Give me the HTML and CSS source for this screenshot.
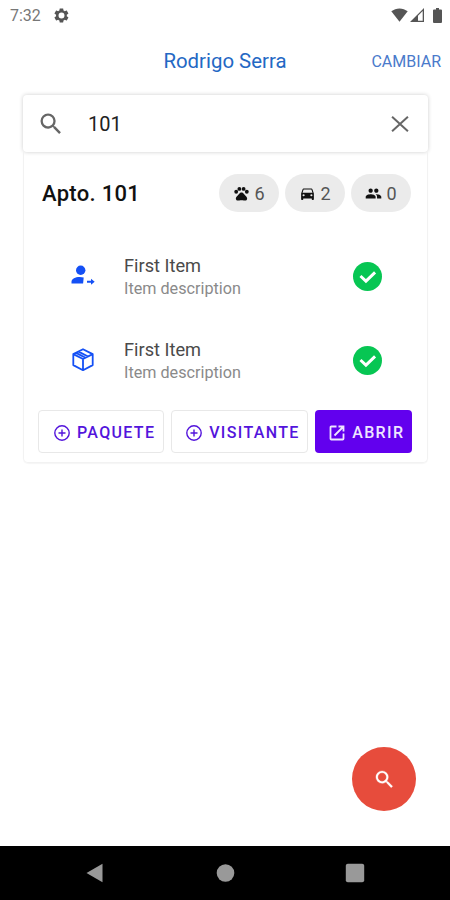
FILE: index.html
```
<!DOCTYPE html>
<html lang="es">
<head>
    <meta charset="UTF-8">
    <meta name="viewport" content="width=device-width, initial-scale=1.0">
    <title>Rodrigo Serra</title>
    <link rel="stylesheet" href="styles.css">
</head>
<body>
    <div class="status-bar">
        <span class="clock">7:32</span>
        <svg class="gear" viewBox="0 0 24 24"><path fill-rule="evenodd" d="M19.4 13c0-.3.1-.6.1-1s0-.7-.1-1l2.1-1.600c.2-.1.200-.4.100-.6l-2-3.500c-.1-.2-.4-.3-.6-.2l-2.500 1c-.5-.4-1.100-.7-1.700-1l-.4-2.600c0-.2-.2-.4-.5-.4h-4c-.2 0-.4.200-.5.400l-.4 2.600c-.6.300-1.100.600-1.700 1l-2.500-1c-.2-.1-.5 0-.6.200l-2 3.500c-.1.200-.1.500.1.600l2.100 1.600c0 .3-.1.600-.1 1s0 .7.100 1l-2.100 1.600c-.2.100-.2.400-.1.600l2 3.500c.1.200.4.300.6.200l2.500-1c.5.400 1.100.7 1.700 1l.4 2.600c0 .2.200.4.500.4h4c.2 0 .4-.2.500-.4l.4-2.600c.6-.3 1.100-.6 1.700-1l2.500 1c.2.100.5 0 .6-.2l2-3.500c.1-.2.1-.5-.1-.6zM12 16.200a4.200 4.200 0 1 1 0-8.400 4.200 4.200 0 0 1 0 8.400z"/></svg>
        <div class="status-icons">
            <svg width="17" height="14" viewBox="0 0 17 14"><path d="M.3 3.300C5 -.6 12 -.6 16.700 3.300L8.500 13.700z"/></svg>
            <svg width="15" height="14" viewBox="0 0 15 14"><path fill-rule="evenodd" d="M0 14L14 0v14zM8 7.700v5h4.700V3z"/></svg>
            <svg class="battery" width="9" height="15" viewBox="0 0 9 15"><path d="M1 1.500h2V0h3v1.500h2a1 1 0 0 1 1 1V14a1 1 0 0 1-1 1H1a1 1 0 0 1-1-1V2.500a1 1 0 0 1 1-1z"/></svg>
        </div>
    </div>

    <header class="app-bar">
        <h1>Rodrigo Serra</h1>
        <a class="change-link">CAMBIAR</a>
    </header>

    <main>
        <div class="search-box">
            <svg class="search-icon" viewBox="0 0 24 24"><path d="M15.500 14h-.79l-.28-.27A6.471 6.471 0 0 0 16 9.500 6.500 6.500 0 1 0 9.500 16c1.610 0 3.090-.59 4.230-1.570l.27.28v.79l5 4.990L20.490 19l-4.990-5zm-6 0C7.010 14 5 11.990 5 9.500S7.010 5 9.500 5 14 7.010 14 9.500 11.990 14 9.500 14z"/></svg>
            <span class="search-text">101</span>
            <svg class="close-icon" viewBox="0 0 24 24"><path d="M5.200 5.700l13.600 12.600M18.800 5.700L5.200 18.300"/></svg>
        </div>

        <section class="card">
            <div class="card-header">
                <h2>Apto. 101</h2>
                <div class="chips">
                    <span class="chip">
                        <svg viewBox="0 0 24 24"><circle cx="4.500" cy="9.500" r="2.700"/><circle cx="9" cy="5.500" r="2.700"/><circle cx="15" cy="5.500" r="2.700"/><circle cx="19.500" cy="9.500" r="2.700"/><path d="M17.340 14.860c-.87-1.020-1.600-1.890-2.480-2.910-.46-.54-1.050-1.080-1.750-1.320a3.500 3.500 0 0 0-2.220 0c-.69.24-1.280.78-1.750 1.320-.87 1.020-1.600 1.890-2.480 2.910-1.310 1.310-2.920 2.760-2.620 4.790.29 1.020 1.020 2.030 2.330 2.320.73.150 3.060-.44 5.540-.44h.18c2.480 0 4.810.58 5.540.44 1.310-.29 2.040-1.310 2.330-2.320.31-2.040-1.300-3.490-2.620-4.790z"/></svg>
                        6
                    </span>
                    <span class="chip">
                        <svg viewBox="0 0 24 24"><path d="M18.920 6.010C18.720 5.420 18.160 5 17.500 5h-11c-.66 0-1.210.42-1.420 1.010L3 12v8c0 .55.45 1 1 1h1c.55 0 1-.45 1-1v-1h12v1c0 .55.45 1 1 1h1c.55 0 1-.45 1-1v-8l-2.080-5.990zM6.500 16a1.500 1.500 0 1 1 0-3 1.500 1.500 0 0 1 0 3zm11 0a1.500 1.500 0 1 1 0-3 1.500 1.500 0 0 1 0 3zM5 11l1.500-4.500h11L19 11H5z"/></svg>
                        2
                    </span>
                    <span class="chip">
                        <svg viewBox="0 0 24 24"><path d="M16 11c1.660 0 2.990-1.340 2.990-3S17.660 5 16 5s-3 1.340-3 3 1.340 3 3 3zm-8 0c1.660 0 2.990-1.340 2.990-3S9.660 5 8 5 5 6.340 5 8s1.340 3 3 3zm0 2c-2.330 0-7 1.170-7 3.500V19h14v-2.500c0-2.330-4.670-3.500-7-3.500zm8 0c-.29 0-.62.020-.97.050 1.160.84 1.970 1.970 1.970 3.450V19h6v-2.500c0-2.330-4.670-3.500-7-3.500z"/></svg>
                        0
                    </span>
                </div>
            </div>

            <ul class="item-list">
                <li class="item">
                    <svg class="item-icon" viewBox="0 0 24 24"><circle cx="9.700" cy="6.300" r="4.700"/><path d="M.5 19.500v-1.700c0-3.300 4-4.900 8-4.900 1.700 0 3.100.2 4.200.6l-.6 6zM16 16.800h4v-2l3.700 3-3.700 3v-2h-4z"/></svg>
                    <div class="item-text">
                        <p class="item-title">First Item</p>
                        <p class="item-desc">Item description</p>
                    </div>
                    <svg class="check" viewBox="0 0 28 28"><circle cx="14" cy="14" r="14"/><path d="M7.200 13.500l5.300 5 8.800-8.500"/></svg>
                </li>
                <li class="item">
                    <svg class="item-icon outline" viewBox="0 0 24 24"><path d="M12 1.200l9.700 4.900v11L12 22.200 2.300 17.100v-11zM2.300 6.100L12 11l9.700-4.900M12 11v11.200M7.500 3.600l9.500 4.900M5 4.900l9.500 4.900"/></svg>
                    <div class="item-text">
                        <p class="item-title">First Item</p>
                        <p class="item-desc">Item description</p>
                    </div>
                    <svg class="check" viewBox="0 0 28 28"><circle cx="14" cy="14" r="14"/><path d="M7.200 13.500l5.300 5 8.800-8.500"/></svg>
                </li>
            </ul>

            <div class="actions">
                <button class="btn btn-package">
                    <svg viewBox="0 0 16 16"><circle cx="8" cy="8" r="7.200"/><path d="M8 4.500v7M4.500 8h7"/></svg>
                    PAQUETE
                </button>
                <button class="btn btn-visitor">
                    <svg viewBox="0 0 16 16"><circle cx="8" cy="8" r="7.200"/><path d="M8 4.500v7M4.500 8h7"/></svg>
                    VISITANTE
                </button>
                <button class="btn btn-open">
                    <svg viewBox="0 0 16 16"><path d="M7.500 1.500H2.300a.8.8 0 0 0-.8.800v11.400a.8.8 0 0 0 .8.800h11.400a.8.8 0 0 0 .8-.8V8.500M9.500 1.500h5v5M14 2L5.500 10.500"/></svg>
                    ABRIR
                </button>
            </div>
        </section>
    </main>

    <button class="fab">
        <svg viewBox="0 0 24 24"><path d="M15.500 14h-.79l-.28-.27A6.471 6.471 0 0 0 16 9.500 6.500 6.500 0 1 0 9.500 16c1.610 0 3.090-.59 4.230-1.570l.27.28v.79l5 4.990L20.490 19l-4.990-5zm-6 0C7.010 14 5 11.990 5 9.500S7.010 5 9.500 5 14 7.010 14 9.500 11.990 14 9.500 14z"/></svg>
    </button>

    <nav class="nav-bar">
        <svg viewBox="0 0 20 20"><path d="M1.500 10L17.500 .8v18.400z"/></svg>
        <svg viewBox="0 0 20 20"><circle cx="10.500" cy="10" r="8.800"/></svg>
        <svg viewBox="0 0 20 20"><rect x=".8" y=".8" width="18.400" height="18.400" rx="2"/></svg>
    </nav>
</body>
</html>
```

FILE: styles.css
```
* {
    box-sizing: border-box;
}
body {
    display: flex;
    flex-direction: column;
    height: 900px;
    margin: 0;
    overflow: hidden;
    background-color: #fff;
    font-family: Roboto, "Liberation Sans", sans-serif;
}
h1, h2, p, ul {
    margin: 0;
    padding: 0;
    font-weight: 400;
}
svg {
    flex-shrink: 0;
}
.status-bar {
    display: flex;
    align-items: center;
    height: 30px;
    padding: 0 8px 0 10px;
    color: #777;
    fill: #555;
}
.clock {
    width: 43px;
    font-size: 16px;
}
.gear {
    width: 17px;
    height: 17px;
}
.status-icons {
    display: flex;
    align-items: center;
    gap: 2px;
    margin-left: auto;
}
.battery {
    margin-left: 6px;
}
.app-bar {
    display: grid;
    grid-template-columns: 1fr auto 1fr;
    align-items: center;
    height: 62px;
    padding: 0 9px;
    color: #2468c4;
}
.app-bar h1 {
    grid-column: 2;
    font-size: 20.4px;
}
.change-link {
    justify-self: end;
    font-size: 16px;
    color: #4a7acb;
}
main {
    padding: 3px 22px 0 23px;
}
.search-box {
    display: flex;
    align-items: center;
    height: 57px;
    padding: 0 14px;
    border-radius: 4px;
    box-shadow: 0 0 4px rgba(0,0,0,0.2);
}
.search-icon, .close-icon {
    width: 28px;
    height: 28px;
    fill: #666;
}
.close-icon {
    fill: none;
    stroke: #666;
    stroke-width: 1.7;
}
.search-text {
    flex: 1;
    margin-left: 23px;
    font-size: 20px;
    color: #222;
}
.card {
    height: 311px;
    border: 1px solid #f2f2f2;
    border-top: none;
    border-radius: 0 0 5px 5px;
    box-shadow: 0 1px 1px rgba(0,0,0,0.04);
}
.card-header {
    display: flex;
    align-items: center;
    justify-content: space-between;
    height: 82px;
    padding: 0 16px 0 18px;
}
.card-header h2 {
    font-size: 22px;
    font-weight: 500;
    letter-spacing: 0.3px;
    color: #111;
}
.chips {
    display: flex;
    gap: 6px;
}
.chip {
    display: flex;
    align-items: center;
    justify-content: center;
    gap: 4px;
    width: 60px;
    height: 38px;
    border-radius: 19px;
    background-color: #ebebeb;
    font-size: 18px;
    color: #555;
}
.chip svg {
    width: 17px;
    height: 17px;
    fill: #111;
}
.item-list {
    list-style: none;
}
.item {
    display: flex;
    align-items: center;
    height: 84px;
    padding: 0 45px 0 47px;
}
.item-icon {
    width: 24px;
    height: 24px;
    fill: #1450f5;
}
.outline {
    fill: none;
    stroke: #1450f5;
    stroke-width: 1.8;
    stroke-linejoin: round;
}
.item-text {
    flex: 1;
    margin-left: 29px;
    padding-top: 2px;
}
.item-title {
    font-size: 18.2px;
    line-height: 23px;
    color: #4a4a4a;
}
.item-desc {
    font-size: 16.2px;
    line-height: 23px;
    color: #8a8a8a;
}
.check {
    width: 29px;
    height: 29px;
    fill: #07c653;
}
.check path {
    fill: none;
    stroke: #fff;
    stroke-width: 2.8;
}
.actions {
    display: flex;
    gap: 7px;
    padding: 8px 15px 0 14px;
}
.btn {
    display: flex;
    align-items: center;
    justify-content: center;
    gap: 7px;
    height: 43px;
    padding: 2px 0 0 7px;
    border: 1px solid #e8e8e8;
    border-radius: 4px;
    background-color: #fff;
    font-family: inherit;
    font-size: 16px;
    font-weight: 500;
    letter-spacing: 1.35px;
    color: #5314dc;
}
.btn svg {
    width: 16px;
    height: 16px;
    fill: none;
    stroke: currentColor;
    stroke-width: 1.4;
}
.btn-package {
    width: 127px;
}
.btn-visitor {
    width: 137px;
}
.btn-open {
    width: 98px;
    border: none;
    background-color: #6200ee;
    color: #eee5ff;
}
.btn-open svg {
    stroke-width: 1.8;
}
.fab {
    display: flex;
    align-items: center;
    justify-content: center;
    align-self: flex-end;
    width: 64px;
    height: 64px;
    margin: auto 34px 35px 0;
    padding: 0;
    border: none;
    border-radius: 50%;
    background-color: #e74c3c;
}
.fab svg {
    width: 23px;
    height: 23px;
    fill: #fff;
    stroke: #fff;
    stroke-width: 0.3;
}
.nav-bar {
    display: flex;
    align-items: center;
    justify-content: space-between;
    height: 54px;
    padding: 0 85px;
    background-color: #000;
    fill: #999;
}
.nav-bar svg {
    width: 20px;
    height: 20px;
}
```
